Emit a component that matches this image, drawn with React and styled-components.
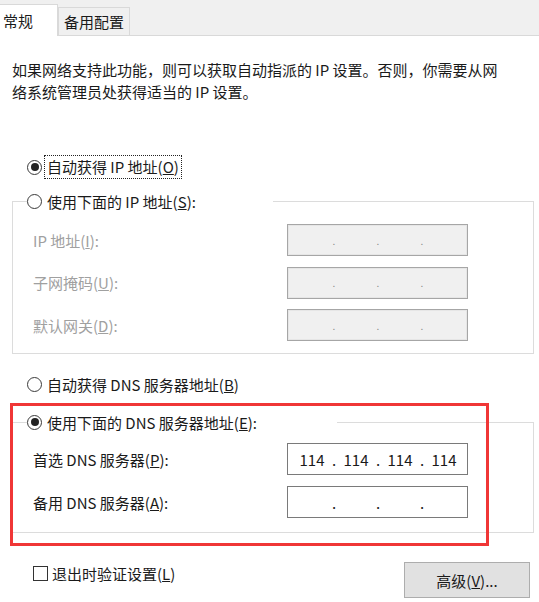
import styled, { createGlobalStyle } from "styled-components";

const GlobalStyle = createGlobalStyle`
  body {
    margin: 0;
    background: #fff;
    font-family: "Noto Sans CJK SC", "Noto Sans", sans-serif;
    font-size: 15px;
    color: #1a1a1a;
  }
`;

const Page = styled.div`
  position: relative;
  width: 539px;
  height: 602px;
  overflow: hidden;
  background: #fff;
`;

const TabBar = styled.div`
  display: flex;
  align-items: flex-end;
  height: 35px;
  background: #f0f0f0;
  border-bottom: 1px solid #d9d9d9;
`;

const Tab = styled.div`
  display: flex;
  align-items: center;
  box-sizing: border-box;
  height: ${(p) => (p.$active ? "32px" : "28px")};
  padding: ${(p) => (p.$active ? "0 24px 0 3px" : "0 5px")};
  margin-bottom: ${(p) => (p.$active ? "-1px" : "0")};
  background: ${(p) => (p.$active ? "#fff" : "#f0f0f0")};
  border: 1px solid #d9d9d9;
  border-left: ${(p) => (p.$active ? "none" : "1px solid #d9d9d9")};
  border-bottom: none;
  white-space: nowrap;
  line-height: 1;
`;

const Body = styled.div`
  padding: 23px 5px 0 12px;
`;

const Intro = styled.p`
  margin: 0;
  line-height: 22px;
  white-space: nowrap;
`;

const RadioRow = styled.label`
  display: flex;
  align-items: center;
  height: 24px;
  margin-top: ${(p) => p.$top || 0}px;
  margin-left: ${(p) => p.$indent || 0}px;
  white-space: nowrap;
`;

const Circle = styled.span`
  position: relative;
  box-sizing: border-box;
  width: 15px;
  height: 15px;
  margin-right: 5px;
  border: 1px solid #3a3a3a;
  border-radius: 50%;
  background: #fff;
  flex: none;

  &::after {
    content: "";
    display: ${(p) => (p.$checked ? "block" : "none")};
    position: absolute;
    left: 2.5px;
    top: 2.5px;
    width: 8px;
    height: 8px;
    border-radius: 50%;
    background: #222;
  }
`;

const Focus = styled.span`
  padding: 0 2px;
  margin-left: -2px;
  line-height: 22px;
  outline: 1px dotted #222;
`;

const Group = styled.fieldset`
  box-sizing: border-box;
  width: 522px;
  margin: ${(p) => p.$top || 0}px 0 0 0;
  padding: 0 0 ${(p) => p.$bottom || 12}px 13px;
  border: 1px solid #dcdcdc;
  min-width: 0;
`;

const Legend = styled.legend`
  box-sizing: border-box;
  width: ${(p) => p.$width}px;
  padding: 0;
  margin-left: 1px;
`;

const Rows = styled.div`
  display: grid;
  grid-template-columns: 254px 181px;
  row-gap: ${(p) => p.$gap}px;
  padding-left: 7px;
  margin-top: ${(p) => p.$top}px;
  align-items: center;
`;

const Label = styled.span`
  color: ${(p) => (p.$disabled ? "#a0a0a0" : "#1a1a1a")};
  white-space: nowrap;
`;

const IpBox = styled.div`
  box-sizing: border-box;
  display: flex;
  align-items: center;
  width: 181px;
  height: 32px;
  padding-left: 6px;
  border: 1px solid ${(p) => (p.$disabled ? "#a6a6a6" : "#7a7a7a")};
  box-shadow: ${(p) => (p.$disabled ? "inset 0 0 0 1px #e6e6e6" : "none")};
  background: ${(p) => (p.$disabled ? "#f0f0f0" : "#fff")};
  color: ${(p) => (p.$disabled ? "#8a8a8a" : "#1a1a1a")};
`;

const Octet = styled.span`
  width: 36px;
  text-align: center;
`;

const Dot = styled.span`
  width: 8px;
  text-align: center;
  font-size: ${(p) => (p.$small ? "10px" : "15px")};
`;

const Footer = styled.div`
  display: flex;
  justify-content: space-between;
  align-items: flex-start;
  margin-top: 29px;
`;

const CheckRow = styled.label`
  display: flex;
  align-items: center;
  height: 22px;
  margin-left: 21px;
  white-space: nowrap;
`;

const Box = styled.span`
  box-sizing: border-box;
  width: 15px;
  height: 15px;
  margin-right: 4px;
  border: 1px solid #333;
  background: #fff;
`;

const Button = styled.button`
  box-sizing: border-box;
  width: 126px;
  height: 36px;
  margin: 0 4px 0 0;
  border: 1px solid #adadad;
  background: #e1e1e1;
  font-family: inherit;
  font-size: 15px;
  color: #1a1a1a;
  padding: 0;
`;

const Annotation = styled.div`
  position: absolute;
  left: 10px;
  top: 403px;
  width: 479px;
  height: 143px;
  box-sizing: border-box;
  border: 3px solid #f03636;
  pointer-events: none;
`;

const Ip = ({ value, disabled }) => {
  const parts = value || ["", "", "", ""];
  return (
    <IpBox $disabled={disabled}>
      <Octet>{parts[0]}</Octet>
      <Dot $small={disabled}>.</Dot>
      <Octet>{parts[1]}</Octet>
      <Dot $small={disabled}>.</Dot>
      <Octet>{parts[2]}</Octet>
      <Dot $small={disabled}>.</Dot>
      <Octet>{parts[3]}</Octet>
    </IpBox>
  );
};

const App = () => {
  return (
    <>
      <GlobalStyle />
      <Page>
        <TabBar>
          <Tab $active>常规</Tab>
          <Tab>备用配置</Tab>
        </TabBar>
        <Body>
          <Intro>
            如果网络支持此功能，则可以获取自动指派的 IP 设置。否则，你需要从网
            <br />
            络系统管理员处获得适当的 IP 设置。
          </Intro>

          <RadioRow $top={52} $indent={15}>
            <Circle $checked />
            <Focus>
              自动获得 IP 地址(<u>O</u>)
            </Focus>
          </RadioRow>

          <Group $top={10} $bottom={12}>
            <Legend $width={246}>
              <RadioRow>
                <Circle />
                使用下面的 IP 地址(<u>S</u>):
              </RadioRow>
            </Legend>
            <Rows $top={11} $gap={10.5}>
              <Label $disabled>
                IP 地址(<u>I</u>):
              </Label>
              <Ip disabled />
              <Label $disabled>
                子网掩码(<u>U</u>):
              </Label>
              <Ip disabled />
              <Label $disabled>
                默认网关(<u>D</u>):
              </Label>
              <Ip disabled />
            </Rows>
          </Group>

          <RadioRow $top={18} $indent={15}>
            <Circle />
            自动获得 DNS 服务器地址(<u>B</u>)
          </RadioRow>

          <Group $top={14} $bottom={14}>
            <Legend $width={310}>
              <RadioRow>
                <Circle $checked />
                使用下面的 DNS 服务器地址(<u>E</u>):
              </RadioRow>
            </Legend>
            <Rows $top={9} $gap={11}>
              <Label>
                首选 DNS 服务器(<u>P</u>):
              </Label>
              <Ip value={["114", "114", "114", "114"]} />
              <Label>
                备用 DNS 服务器(<u>A</u>):
              </Label>
              <Ip />
            </Rows>
          </Group>

          <Footer>
            <CheckRow>
              <Box />
              退出时验证设置(<u>L</u>)
            </CheckRow>
            <Button>
              高级(<u>V</u>)...
            </Button>
          </Footer>
        </Body>
        <Annotation />
      </Page>
    </>
  );
};

export default App;
